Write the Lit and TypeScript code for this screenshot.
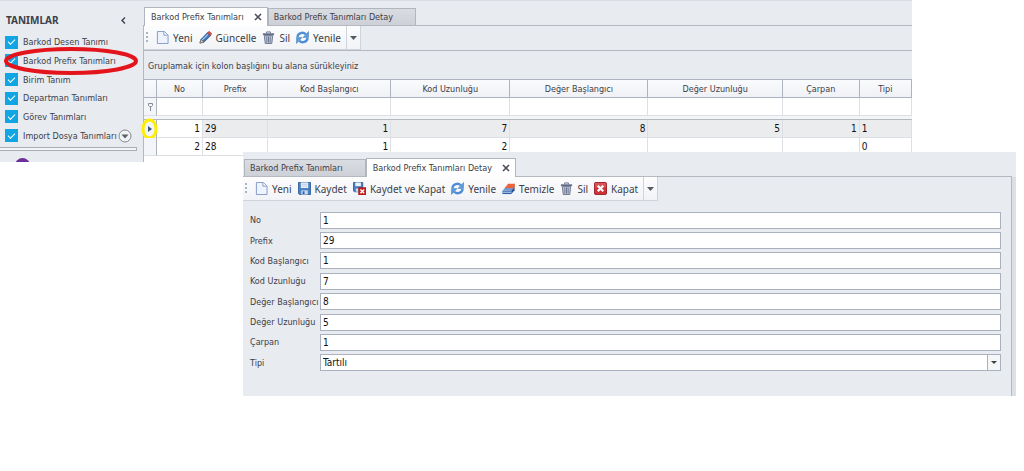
import { LitElement, html, css, svg, nothing } from "lit";
import { customElement, property } from "lit/decorators.js";
import { classMap } from "lit/directives/class-map.js";

const icons: Record<string, unknown> = {
  page: svg`<path d="M1.5.5h7.500l4 4v9h-11.500z" fill="#eef4ff" stroke="#7f95c4"/><path d="M8.500.5v4h4" fill="#fff" stroke="#7f95c4"/>`,
  pencil: svg`<path d="M1 13l1.2-4L9 2l3.4 3-7 7z" fill="#4479b8" stroke="#2d517f" stroke-width=".8"/><path d="M3.6 9.6L9.6 3.6" stroke="#a9cdf2" stroke-width="1.2"/><path d="M9 2l1.4-1.2q.6-.5 1.3 0l1.6 1.6q.6.6 0 1.2L12.4 5z" fill="#d9544a" stroke="#93362f" stroke-width=".6"/><path d="M1 13l1.2-4 3.2 3z" fill="#e9d0ad" stroke="#5d5347" stroke-width=".6"/>`,
  trash: svg`<path d="M2.5 5h9l-1 8.5h-7z" fill="#c3cbdb" stroke="#66728c"/><path d="M5.2 6v6.5M7 6v6.5M8.800 6v6.5" stroke="#66728c"/><path d="M1 3.5h12" stroke="#5f6b86" stroke-width="2"/><path d="M5 2.5V1h4v1.5" fill="none" stroke="#5f6b86"/>`,
  refresh: svg`<path d="M1.5 6.500A5.300 5.300 0 0 1 10.500 3.500" fill="none" stroke="#4f8fd6" stroke-width="2.600"/><path d="M13.500.5v6.500H7.500z" fill="#5c9bdc" stroke="#3a74b5" stroke-width=".5"/><path d="M12.500 7.500A5.300 5.300 0 0 1 3.500 10.500" fill="none" stroke="#4f8fd6" stroke-width="2.600"/><path d="M.5 13.500V7h6z" fill="#5c9bdc" stroke="#3a74b5" stroke-width=".5"/>`,
  save: svg`<path d="M.5.5h13v13h-12l-1-1z" fill="#4a7fc2" stroke="#34609c"/><path d="M3 .5h8v6H3z" fill="#e8f1fc"/><path d="M4 2.500h6M4 4.500h6" stroke="#a9bfdc" stroke-width=".7"/><path d="M3.500 9h7v4.500h-7z" fill="#cddcf0"/><path d="M5 10h2v3H5z" fill="#34609c"/>`,
  saveClose: svg`<path d="M.5.5h10v10H1.500l-1-1z" fill="#4a7fc2" stroke="#34609c"/><path d="M2.500.5h6v4h-6z" fill="#e8f1fc"/><path d="M3 7h4v3.500H3z" fill="#cddcf0"/><path d="M6 6h8v8H6z" fill="#c8201f" stroke="#8f1616" stroke-width=".6"/><path d="M8 8l4 4M12 8l-4 4" stroke="#fff" stroke-width="1.500"/>`,
  eraser: svg`<path d="M.5 9.500L4 5.500h9.500L10 9.500z" fill="#6e9bd9"/><path d="M.5 9.500H10V13H.5z" fill="#2f62ad"/><path d="M10 9.500l3.500-4V9L10 13z" fill="#234b88"/><path d="M2.800 6.800L6.500 2H14l-.5 3.500-1.200 1.300z" fill="#e8643c"/><path d="M13.500 5.500L14 2v3l-1.500 3z" fill="#b2401f"/><path d="M1 11h9" stroke="#d5e4f8"/>`,
  close: svg`<rect x=".5" y=".5" width="13" height="13" rx="1.500" fill="#cf3338" stroke="#9b1c22"/><path d="M1 1h12v5H1z" fill="#e0686a" opacity=".6"/><path d="M4 4l6 6M10 4l-6 6" stroke="#fff" stroke-width="2.400"/>`,
};

const shared = css`
  :host {
    display: block;
    font: 9px/14px "DejaVu Sans Condensed", "DejaVu Sans", sans-serif;
    color: #3c4048;
  }
  * {
    box-sizing: border-box;
  }
  button {
    font: inherit;
    color: inherit;
    background: none;
    border: 0;
    padding: 0;
    margin: 0;
  }
`;

@customElement("tab-strip")
class TabStrip extends LitElement {
  @property({ attribute: false }) tabs: string[] = [];
  @property({ type: Number }) active = 0;

  static styles = [
    shared,
    css`
      .tabs {
        display: flex;
        align-items: flex-end;
        height: 19px;
        padding-left: 1px;
        border-bottom: 1px solid #b4b8bf;
      }
      .tab {
        display: flex;
        align-items: center;
        height: 17px;
        padding: 0 22px 0 5px;
        background: linear-gradient(#d9dce1, #cdd1d7);
        border: 1px solid #b0b5be;
        border-bottom: 0;
      }
      .tab.active {
        position: relative;
        height: 19px;
        margin-bottom: -1px;
        padding: 0 5px 0 6px;
        background: #fff;
      }
      .x {
        width: 8px;
        height: 8px;
        margin-left: 10px;
      }
      .x svg {
        display: block;
      }
    `,
  ];

  render() {
    return html`<div class="tabs" role="tablist">
      ${this.tabs.map((t, i) => {
        const active = i === this.active;
        return html`<div class=${classMap({ tab: true, active })}>
          <button role="tab" aria-selected=${active}>${t}</button>
          ${active
            ? html`<button class="x" aria-label="Kapat">
                <svg width="8" height="8" viewBox="0 0 8 8"><path d="M1 1l6 6M7 1l-6 6" stroke="#4a4e56" stroke-width="1.600" /></svg>
              </button>`
            : nothing}
        </div>`;
      })}
    </div>`;
  }
}

@customElement("tool-bar")
class ToolBar extends LitElement {
  @property({ attribute: false }) items: [string, string][] = [];

  static styles = [
    shared,
    css`
      .bar {
        display: inline-flex;
        vertical-align: top;
        height: 24px;
        align-items: center;
        background: linear-gradient(#fdfdfe, #f1f3f6);
        border-right: 1px solid #d0d4da;
        border-bottom: 1px solid #d0d4da;
        font: 10px/14px "Noto Sans", "Open Sans", sans-serif;
      }
      .grip {
        width: 2px;
        height: 12px;
        margin: 0 5px 0 2px;
        background: repeating-linear-gradient(#a9b4c6 0 2px, transparent 2px 4px);
      }
      .item {
        display: flex;
        align-items: center;
        gap: 4px;
        padding: 0 3px;
        white-space: nowrap;
      }
      .more {
        align-self: stretch;
        display: grid;
        place-items: center;
        width: 14px;
        margin-left: 2px;
        border-left: 1px solid #d0d4da;
      }
    `,
  ];

  render() {
    return html`<div class="bar" role="toolbar">
      <span class="grip"></span>
      ${this.items.map(
        ([icon, text]) => html`<button class="item">
          <svg width="13" height="13" viewBox="0 0 14 14">${icons[icon]}</svg>${text}
        </button>`,
      )}
      <button class="more" aria-label="Diğer">
        <svg width="7" height="4" viewBox="0 0 7 4"><path d="M0 0h7L3.500 4z" fill="#555a63" /></svg>
      </button>
    </div>`;
  }
}

@customElement("nav-panel")
class NavPanel extends LitElement {
  private items = [
    "Barkod Desen Tanımı",
    "Barkod Prefix Tanımları",
    "Birim Tanım",
    "Departman Tanımları",
    "Görev Tanımları",
    "Import Dosya Tanımları",
  ];

  static styles = [
    shared,
    css`
      .panel {
        height: 100%;
        overflow: hidden;
        background: #e8ebf0;
      }
      .head {
        display: flex;
        justify-content: space-between;
        align-items: center;
        padding: 12px 17px 0 6px;
      }
      h2 {
        margin: 0;
        font: bold 10px/14px "Noto Sans", sans-serif;
      }
      .fold svg,
      .down svg {
        display: block;
      }
      .items {
        display: grid;
        grid-auto-rows: 1fr;
        height: 112px;
        margin: 6px 0 0;
        padding: 0 0 0 5px;
        list-style: none;
      }
      .item {
        position: relative;
        display: flex;
        align-items: center;
      }
      label {
        display: flex;
        align-items: center;
        gap: 5px;
        white-space: nowrap;
      }
      input {
        appearance: none;
        display: grid;
        place-items: center;
        width: 13px;
        height: 13px;
        margin: 0;
        background: #12a5e3;
      }
      input:checked::before {
        content: "";
        width: 6px;
        height: 3px;
        margin-bottom: 2px;
        border: solid #fff;
        border-width: 0 0 1px 1px;
        transform: rotate(-45deg);
      }
      .ring {
        position: absolute;
        left: -2px;
        top: -5px;
      }
      .down {
        margin-left: 1px;
      }
      .split {
        height: 4px;
        margin: 2px 6px 0 0;
        border: 1px solid #a9adb4;
        border-left: 0;
        background: #f4f5f7;
      }
      .badge {
        width: 15px;
        height: 15px;
        margin: 7px 0 0 15px;
        border-radius: 50%;
        background: #6a2f9a;
      }
    `,
  ];

  render() {
    return html`<nav class="panel">
      <div class="head">
        <h2>TANIMLAR</h2>
        <button class="fold" aria-label="Daralt">
          <svg width="5" height="7" viewBox="0 0 5 7"><path d="M4 .5L1 3.500l3 3" fill="none" stroke="#3c4048" stroke-width="1.400" /></svg>
        </button>
      </div>
      <ul class="items">
        ${this.items.map(
          (t, i) => html`<li class="item">
            <label><input type="checkbox" checked />${t}</label>
            ${i === 1
              ? html`<svg class="ring" width="138" height="28" viewBox="0 0 138 28">
                  <ellipse cx="68" cy="14" rx="65" ry="12" fill="none" stroke="#e3141c" stroke-width="4" />
                </svg>`
              : nothing}
            ${i === 5
              ? html`<button class="down" aria-label="Aşağı">
                  <svg width="14" height="14" viewBox="0 0 14 14">
                    <circle cx="7" cy="7" r="6" fill="#f1f2f4" stroke="#85898f" />
                    <path d="M3.500 5.500h7L7 9.500z" fill="#5b5f66" />
                  </svg>
                </button>`
              : nothing}
          </li>`,
        )}
      </ul>
      <div class="split"></div>
      <div class="badge"></div>
    </nav>`;
  }
}

@customElement("data-grid")
class DataGrid extends LitElement {
  private cols: [string, string][] = [
    ["No", "c-no"],
    ["Prefix", "c-prefix"],
    ["Kod Başlangıcı", "c-kb"],
    ["Kod Uzunluğu", "c-ku"],
    ["Değer Başlangıcı", "c-db"],
    ["Değer Uzunluğu", "c-du"],
    ["Çarpan", "c-carpan"],
    ["Tipi", "c-tipi"],
  ];
  private rows = [
    ["1", "29", "1", "7", "8", "5", "1", "1"],
    ["2", "28", "1", "2", "", "", "", "0"],
  ];

  static styles = [
    shared,
    css`
      table {
        width: 100%;
        table-layout: fixed;
        border-collapse: separate;
        border-spacing: 0;
        background: #fff;
      }
      .c-mark { width: 13px; }
      .c-no { width: 6%; }
      .c-prefix { width: 8.5%; }
      .c-kb { width: 16%; }
      .c-ku { width: 15.5%; }
      .c-db { width: 18%; }
      .c-du { width: 17.5%; }
      .c-carpan { width: 10%; }
      th,
      td {
        height: 18px;
        padding: 0 2px;
        border-right: 1px solid #dcdfe4;
        border-bottom: 1px solid #dcdfe4;
      }
      th {
        height: 19px;
        font-weight: normal;
        background: linear-gradient(#fafbfd, #eff1f5);
        border-color: #aeb4bf;
        border-top: 1px solid #aeb4bf;
      }
      .gap td {
        height: 4px;
        background: #f4f5f7;
        border-right: 0;
        border-bottom: 1px solid #b4b8bf;
      }
      .num {
        text-align: right;
      }
      .body td {
        font-size: 10px;
        color: #111;
      }
      .current td {
        background: #ebecee;
      }
      .current .first {
        background: #fff;
      }
      .body .mark,
      .mark {
        position: relative;
        padding: 0;
        background: #f4f5f8;
        border-right-color: #aeb4bf;
      }
      .mark svg {
        display: block;
        margin: 0 auto;
      }
      .mark .ring {
        position: absolute;
        left: -3px;
        top: -2px;
      }
    `,
  ];

  render() {
    return html`<table>
      <thead>
        <tr>
          <th class="c-mark"></th>
          ${this.cols.map(([t, c]) => html`<th class=${c} scope="col">${t}</th>`)}
        </tr>
      </thead>
      <tbody>
        <tr>
          <td class="mark">
            <svg width="5" height="8" viewBox="0 0 5 8"><path d="M.5.5h4v2l-1 1h-2l-1-1zM2.500 4v4" fill="none" stroke="#858b96" /></svg>
          </td>
          ${this.cols.map(() => html`<td></td>`)}
        </tr>
        <tr class="gap"><td colspan="9"></td></tr>
        ${this.rows.map(
          (r, y) => html`<tr class=${classMap({ body: true, current: y === 0 })}>
            <td class="mark">
              ${y === 0
                ? html`<svg width="4" height="6" viewBox="0 0 4 6"><path d="M0 0l4 3-4 3z" fill="#3b5878" /></svg>
                    <svg class="ring" width="17" height="22" viewBox="0 0 17 22">
                      <ellipse cx="8.500" cy="11" rx="6.500" ry="9" fill="none" stroke="#ffee00" stroke-width="3" />
                    </svg>`
                : nothing}
            </td>
            ${r.map((v, x) => html`<td class=${classMap({ num: x !== 1 && x !== 7, first: x === 0 })}>${v}</td>`)}
          </tr>`,
        )}
      </tbody>
    </table>`;
  }
}

@customElement("detail-form")
class DetailForm extends LitElement {
  private fields = [
    ["No", "1"],
    ["Prefix", "29"],
    ["Kod Başlangıcı", "1"],
    ["Kod Uzunluğu", "7"],
    ["Değer Başlangıcı", "8"],
    ["Değer Uzunluğu", "5"],
    ["Çarpan", "1"],
  ];

  static styles = [
    shared,
    css`
      form {
        display: grid;
        grid-auto-rows: 1fr;
        height: 163px;
      }
      .row {
        display: grid;
        grid-template-columns: 70px 1fr;
        align-items: center;
        white-space: nowrap;
      }
      input,
      select {
        width: 100%;
        height: 17px;
        margin: 0;
        padding: 0 2px;
        border: 1px solid #a9b1be;
        border-radius: 0;
        background: #fff;
        font: inherit;
        font-size: 10px;
        color: #111;
      }
      select {
        appearance: none;
      }
      .combo {
        display: grid;
        grid-template-columns: 1fr 14px;
      }
      .combo select {
        grid-area: 1 / 1 / 2 / 3;
      }
      .arrow {
        grid-area: 1 / 2;
        display: grid;
        place-items: center;
        z-index: 1;
        margin: 1px 1px 1px 0;
        border-left: 1px solid #a9b1be;
        background: #f5f6f8;
        pointer-events: none;
      }
    `,
  ];

  render() {
    return html`<form>
      ${this.fields.map(
        ([label, value], i) => html`<div class="row">
          <label for="f${i}">${label}</label><input id="f${i}" type="text" .value=${value} />
        </div>`,
      )}
      <div class="row">
        <label for="tipi">Tipi</label>
        <div class="combo">
          <select id="tipi"><option>Tartılı</option></select>
          <span class="arrow">
            <svg width="6" height="3" viewBox="0 0 6 3"><path d="M0 0h6L3 3z" fill="#3c4048" /></svg>
          </span>
        </div>
      </div>
    </form>`;
  }
}

@customElement("app-root")
class AppRoot extends LitElement {
  static styles = [
    shared,
    css`
      :host {
        background: #fff;
      }
      .list {
        display: grid;
        grid-template-columns: 143px 1fr;
        height: 162px;
        margin-right: 112px;
      }
      .main {
        display: flex;
        flex-direction: column;
        min-width: 0;
      }
      .top {
        padding-top: 6px;
        background: #e8ebf0;
        border-top: 1px solid #d9dce2;
      }
      nav-panel {
        height: 162px;
        border-top: 1px solid #d9dce2;
      }
      .pane {
        border-left: 1px solid #b4b8bf;
      }
      .grid {
        flex: 1;
      }
      .pane tool-bar {
        border-bottom: 1px solid #b4b8bf;
      }
      .group {
        margin: 0;
        padding: 8px 4px 6px;
      }
      .detail {
        position: relative;
        margin: -10px 8px 0 243px;
        padding: 6px 4px 0 0;
        background: #e8ebf0;
      }
      .card {
        padding-bottom: 23px;
        border-right: 1px solid #b4b8bf;
        box-shadow: 4px 0 #dcdfe4;
      }
      detail-form {
        margin: 9px 10px 0 7px;
      }
    `,
  ];

  render() {
    const tabs = ["Barkod Prefix Tanımları", "Barkod Prefix Tanımları Detay"];
    return html`
      <section class="list">
        <nav-panel></nav-panel>
        <div class="main">
          <div class="top">
            <tab-strip .tabs=${tabs} .active=${0}></tab-strip>
            <div class="pane">
              <tool-bar
                .items=${[["page", "Yeni"], ["pencil", "Güncelle"], ["trash", "Sil"], ["refresh", "Yenile"]]}
              ></tool-bar>
              <p class="group">Gruplamak için kolon başlığını bu alana sürükleyiniz</p>
            </div>
          </div>
          <div class="pane grid"><data-grid></data-grid></div>
        </div>
      </section>
      <section class="detail">
        <tab-strip .tabs=${tabs} .active=${1}></tab-strip>
        <div class="card">
          <tool-bar
            .items=${[
              ["page", "Yeni"],
              ["save", "Kaydet"],
              ["saveClose", "Kaydet ve Kapat"],
              ["refresh", "Yenile"],
              ["eraser", "Temizle"],
              ["trash", "Sil"],
              ["close", "Kapat"],
            ]}
          ></tool-bar>
          <detail-form></detail-form>
        </div>
      </section>
    `;
  }
}
